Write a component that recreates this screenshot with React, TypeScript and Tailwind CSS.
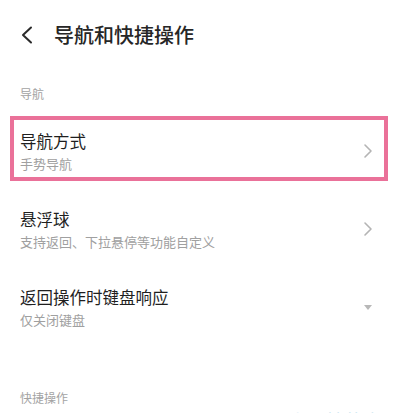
import React from 'react';

const font = { fontFamily: '"Noto Sans CJK SC", "Noto Sans", sans-serif' };

function Chevron() {
  return (
    <svg width="10" height="16" viewBox="0 0 10 16" className="shrink-0">
      <path d="M2 2 L8 8 L2 14" fill="none" stroke="#b4b4b4" strokeWidth="1.6" strokeLinecap="round" strokeLinejoin="round" />
    </svg>
  );
}

function Caret() {
  return (
    <svg width="10" height="8" viewBox="0 0 10 8" className="shrink-0">
      <path d="M1 2 L9 2 L5 7 Z" fill="#b8b8b8" />
    </svg>
  );
}

function Row({ title, sub, right, highlight }: { title: string; sub: string; right: React.ReactNode; highlight?: boolean }) {
  return (
    <div className="relative h-[78px] flex items-center pl-5 pr-[27px]">
      <div className="flex-1 flex flex-col gap-[3px]">
        <div className="text-[16.5px] leading-[22px] text-[#1f1f1f]">{title}</div>
        <div className="text-[13px] leading-[18px] text-[#a0a0a0]">{sub}</div>
      </div>
      {right}
      {highlight && (
        <div className="absolute left-[10px] top-[4px] w-[378px] h-[65px] border-[4px] border-[#ea7199] pointer-events-none" />
      )}
    </div>
  );
}

export default function App() {
  return (
    <div className="relative w-[400px] h-[413px] overflow-hidden bg-white" style={font}>
      <div className="h-[70px] flex items-center pl-5">
        <svg width="14" height="18" viewBox="0 0 14 18" className="shrink-0">
          <path d="M11 1.5 L3 9 L11 16.5" fill="none" stroke="#2a2a2a" strokeWidth="2" strokeLinecap="round" strokeLinejoin="round" />
        </svg>
        <div className="ml-[20px] text-[20px] leading-[28px] font-medium text-[#262626]">导航和快捷操作</div>
      </div>
      <div className="pl-5 pt-[16px] pb-[10px] text-[12px] leading-[16px] text-[#a3a3a3]">导航</div>
      <Row title="导航方式" sub="手势导航" right={<Chevron />} highlight />
      <Row title="悬浮球" sub="支持返回、下拉悬停等功能自定义" right={<Chevron />} />
      <Row title="返回操作时键盘响应" sub="仅关闭键盘" right={<Caret />} />
      <div className="pl-5 mt-[44px] text-[12px] leading-[16px] text-[#a3a3a3]">快捷操作</div>
      <div className="absolute left-[290px] top-[408px] text-[18px] leading-[24px] text-[#c4e2ee]">和平精英攻</div>
    </div>
  );
}
